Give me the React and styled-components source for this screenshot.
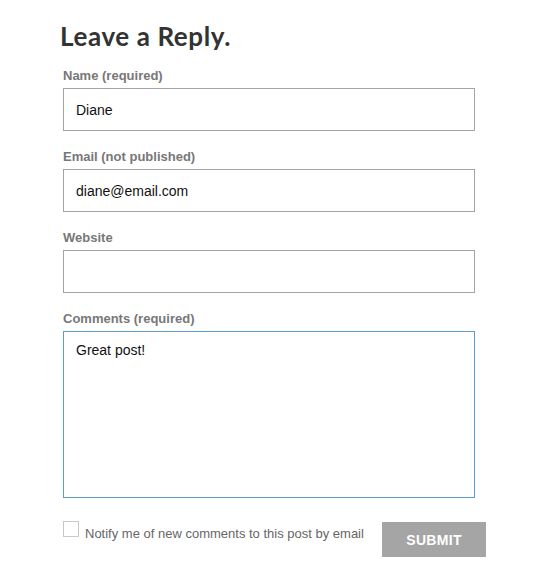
import styled, { createGlobalStyle } from "styled-components";

const GlobalStyle = createGlobalStyle`
  body {
    margin: 0;
    background: #fff;
    font-family: "Liberation Sans", Arial, sans-serif;
  }
`;

const App = () => {
  return (
    <>
      <GlobalStyle />
      <StyledPage>
        <StyledTitle>Leave a Reply.</StyledTitle>
        <StyledForm onSubmit={(e) => e.preventDefault()}>
          <StyledField>
            <StyledLabel>Name (required)</StyledLabel>
            <StyledInput defaultValue="Diane" />
          </StyledField>
          <StyledField>
            <StyledLabel>Email (not published)</StyledLabel>
            <StyledInput defaultValue="diane@email.com" />
          </StyledField>
          <StyledField>
            <StyledLabel>Website</StyledLabel>
            <StyledInput defaultValue="" />
          </StyledField>
          <StyledField>
            <StyledLabel>Comments (required)</StyledLabel>
            <StyledTextarea defaultValue="Great post!" />
          </StyledField>
          <StyledFooter>
            <StyledNotify>
              <StyledCheckbox type="checkbox" />
              <StyledNotifyText>
                Notify me of new comments to this post by email
              </StyledNotifyText>
            </StyledNotify>
            <StyledButton type="submit">SUBMIT</StyledButton>
          </StyledFooter>
        </StyledForm>
      </StyledPage>
    </>
  );
};

const StyledPage = styled.div`
  width: 552px;
  height: 581px;
  padding: 20px 0 0 63px;
  box-sizing: border-box;
`;
const StyledTitle = styled.h2`
  margin: 0 0 0 -3px;
  font-family: Lato, "Open Sans", sans-serif;
  font-weight: 700;
  font-size: 26px;
  letter-spacing: 0.6px;
  line-height: 32px;
  color: #333;
`;
const StyledForm = styled.form`
  display: flex;
  flex-direction: column;
  width: 412px;
  margin-top: 16px;
`;
const StyledField = styled.div`
  display: flex;
  flex-direction: column;
  margin-bottom: 18px;
`;
const StyledLabel = styled.label`
  font-size: 13px;
  font-weight: 700;
  line-height: 15px;
  color: #777;
  margin-bottom: 5px;
`;
const StyledInput = styled.input`
  box-sizing: border-box;
  width: 100%;
  height: 43px;
  border: 1px solid #a4a4a4;
  padding: 0 12px;
  font-family: "Liberation Sans", Arial, sans-serif;
  font-size: 14px;
  color: #111;
  outline: none;
`;
const StyledTextarea = styled.textarea`
  box-sizing: border-box;
  width: 100%;
  height: 167px;
  border: 1px solid #5b9bd1;
  padding: 10px 12px;
  font-family: "Liberation Sans", Arial, sans-serif;
  font-size: 14px;
  color: #111;
  resize: none;
  outline: none;
`;
const StyledFooter = styled.div`
  display: flex;
  flex-direction: row;
  align-items: flex-start;
  justify-content: space-between;
  width: 423px;
  margin-top: 5px;
`;
const StyledNotify = styled.label`
  display: flex;
  align-items: flex-start;
  gap: 6px;
`;
const StyledNotifyText = styled.span`
  font-size: 13px;
  white-space: nowrap;
  color: #666;
  line-height: 16px;
  margin-top: 5px;
`;
const StyledCheckbox = styled.input`
  appearance: none;
  width: 16px;
  height: 16px;
  margin: 0;
  border: 1px solid #c8c8c8;
  background: #fff;
`;
const StyledButton = styled.button`
  width: 104px;
  height: 35px;
  border: none;
  background: #a5a5a5;
  color: #fff;
  font-family: "Liberation Sans", Arial, sans-serif;
  font-weight: 700;
  font-size: 14px;
  letter-spacing: 0.3px;
  margin-top: 1px;
`;

export default App;
